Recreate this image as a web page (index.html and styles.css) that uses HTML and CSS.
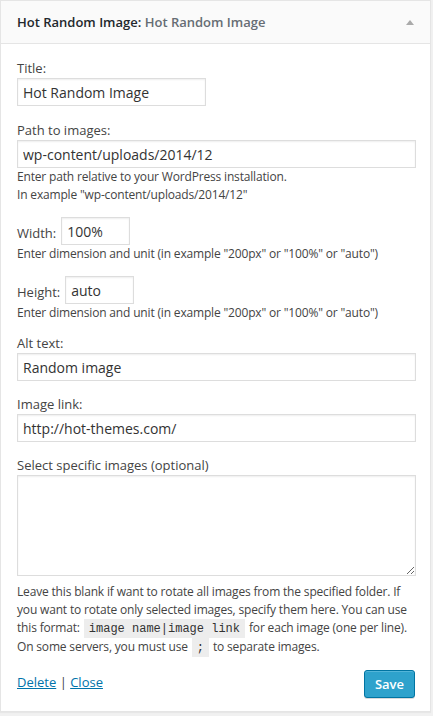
FILE: index.html
```html
<!DOCTYPE html>
<html>
<head>
<meta charset="utf-8">
<link rel="stylesheet" href="styles.css">
</head>
<body>
<div class="widget">
  <div class="widget-top">
    <h3 class="widget-title">Hot Random Image:<span class="in-title"> Hot Random Image</span></h3>
    <span class="toggle-arrow"></span>
  </div>
  <form class="widget-inside">
    <div class="field">
      <label>Title:</label>
      <input class="input input-title" type="text" value="Hot Random Image">
    </div>
    <div class="field gap15">
      <label>Path to images:</label>
      <input class="input input-full" type="text" value="wp-content/uploads/2014/12">
      <div class="desc">Enter path relative to your WordPress installation.<br>In example "wp-content/uploads/2014/12"</div>
    </div>
    <div class="field gap13">
      <div class="inline-row"><label>Width:</label><input class="input input-small" type="text" value="100%"></div>
      <div class="desc">Enter dimension and unit (in example "200px" or "100%" or "auto")</div>
    </div>
    <div class="field gap13">
      <div class="inline-row"><label>Height:</label><input class="input input-small" type="text" value="auto"></div>
      <div class="desc">Enter dimension and unit (in example "200px" or "100%" or "auto")</div>
    </div>
    <div class="field gap12">
      <label>Alt text:</label>
      <input class="input input-full" type="text" value="Random image">
    </div>
    <div class="field gap14">
      <label>Image link:</label>
      <input class="input input-full" type="text" value="http://hot-themes.com/">
    </div>
    <div class="field gap14">
      <label>Select specific images (optional)</label>
      <textarea class="input textarea"></textarea>
      <p class="desc para">Leave this blank if want to rotate all images from the specified folder. If you want to rotate only selected images, specify them here. You can use this format: <code>image name|image link</code> for each image (one per line). On some servers, you must use <code>;</code> to separate images.</p>
    </div>
    <div class="actions">
      <div class="links"><a href="#">Delete</a> | <a href="#">Close</a></div>
      <button type="button" class="button-primary">Save</button>
    </div>
  </form>
</div>
</body>
</html>
```
FILE: styles.css
```css
html, body {
  margin: 0;
  padding: 0;
}
body {
  background: #f1f1f1;
  font-family: "Open Sans", "Liberation Sans", sans-serif;
  color: #444;
  font-size: 13px;
  width: 433px;
  height: 716px;
}
.widget {
  width: 431px;
  box-sizing: border-box;
  background: #fff;
  border: 1px solid #e5e5e5;
  box-shadow: 0 1px 1px rgba(0,0,0,.04);
}
.widget-top {
  height: 42px;
  background: #fafafa;
  border-bottom: 1px solid #e5e5e5;
  display: flex;
  align-items: center;
  justify-content: space-between;
  padding: 0 16px 0 16px;
}
.widget-title {
  margin: 0;
  font-size: 13px;
  font-weight: 600;
  color: #23282d;
  line-height: 1;
}
.in-title {
  color: #666d74;
  font-weight: 600;
}
.toggle-arrow {
  width: 0;
  height: 0;
  border-left: 4px solid transparent;
  border-right: 4px solid transparent;
  border-bottom: 5px solid #aaa;
  margin-top: 1px;
}
.widget-inside {
  display: block;
  margin: 0;
  padding: 15px 14px 13px 16px;
}
.field label {
  display: block;
  line-height: 18px;
  margin-bottom: 1px;
}
.gap12 { margin-top: 12px; }
.gap13 { margin-top: 13px; }
.gap14 { margin-top: 14px; }
.gap15 { margin-top: 15px; }
.input {
  display: block;
  box-sizing: border-box;
  height: 28px;
  margin: 0;
  padding: 3px 5px;
  border: 1px solid #ddd;
  box-shadow: inset 0 1px 2px rgba(0,0,0,.07);
  background: #fff;
  color: #333;
  font-family: "Open Sans", "Liberation Sans", sans-serif;
  font-size: 14px;
  outline: none;
  border-radius: 0;
}
.input-title { width: 189px; }
.input-full { width: 100%; }
.input-small { width: 69px; }
.inline-row {
  display: flex;
  align-items: center;
  gap: 5px;
}
.inline-row label {
  display: inline;
  margin: 0;
  padding-top: 3px;
}
.desc {
  font-size: 12px;
  line-height: 18px;
  letter-spacing: -0.17px;
}
.textarea {
  width: 100%;
  height: 101px;
  resize: vertical;
}
.para {
  margin: 7px 0 0 0;
}
code {
  font-family: "Liberation Mono", monospace;
  font-size: 12px;
  letter-spacing: 0;
  background: rgba(0,0,0,.07);
  padding: 3px 5px 2px;
  margin: 0 1px;
  color: #333;
}
.actions {
  display: flex;
  justify-content: space-between;
  align-items: center;
  margin-top: 13px;
}
.links {
  padding-bottom: 4px;
}
.links a {
  color: #0073aa;
  text-decoration: underline;
}
.button-primary {
  height: 28px;
  padding: 0 10px 1px;
  font-family: "Open Sans", "Liberation Sans", sans-serif;
  font-size: 13px;
  font-weight: 600;
  line-height: 26px;
  color: #fff;
  background: #2ea2cc;
  border: 1px solid #0074a2;
  border-radius: 3px;
  box-shadow: inset 0 1px 0 rgba(120,200,230,.5), 0 1px 0 rgba(0,0,0,.15);
  margin-right: 1px;
}
```
